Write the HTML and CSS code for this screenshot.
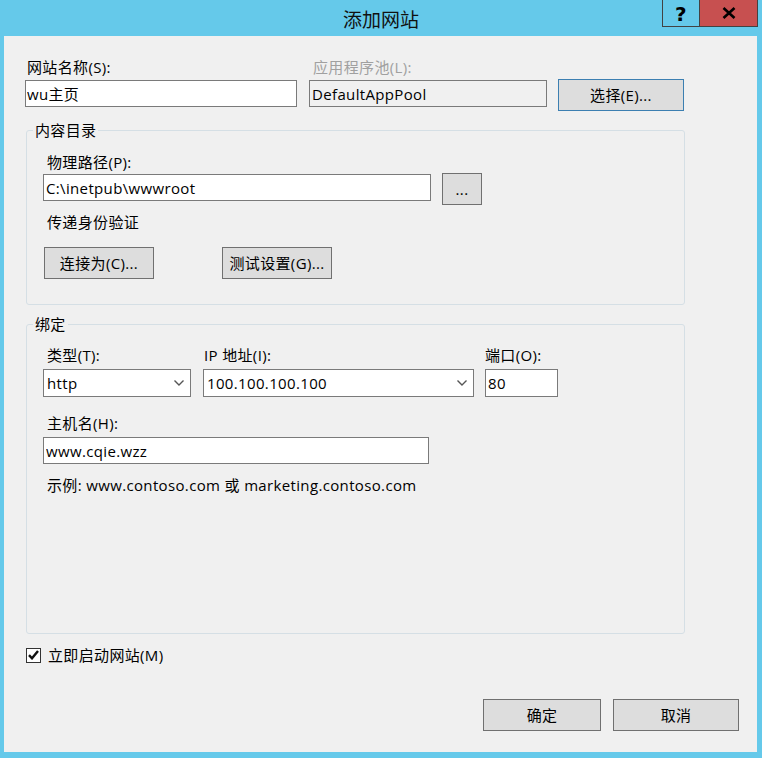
FILE: index.html
```html
<!DOCTYPE html>
<html lang="zh-CN">
<head>
    <meta charset="UTF-8">
    <title>添加网站</title>
    <link rel="stylesheet" href="styles.css">
</head>
<body>

<div class="window">
    <div class="titlebar">
        <div></div>
        <div class="title">添加网站</div>
        <div class="caption-btns">
            <div class="cap-btn help">?</div>
            <div class="cap-btn close">
                <svg width="14" height="12" viewBox="0 0 14 12">
                    <path d="M1.5 1 L12.5 11 M12.5 1 L1.5 11" stroke="#000" stroke-width="2.6" fill="none"/>
                </svg>
            </div>
        </div>
    </div>

    <div class="client">
        <!-- 网站名称 / 应用程序池 -->
        <div class="top-row">
            <div class="field site-name">
                <div class="lbl">网站名称(S):</div>
                <input class="textbox" type="text" value="wu主页">
            </div>
            <div class="field app-pool">
                <div class="lbl disabled">应用程序池(L):</div>
                <input class="textbox readonly" type="text" value="DefaultAppPool" readonly>
            </div>
            <button class="btn btn-default select-btn">选择(E)...</button>
        </div>

        <!-- 内容目录 -->
        <fieldset class="group content-dir">
            <legend>内容目录</legend>
            <div class="group-body">
                <div class="lbl">物理路径(P):</div>
                <div class="path-row">
                    <input class="textbox path-box" type="text" value="C:\inetpub\wwwroot">
                    <button class="btn browse-btn">...</button>
                </div>
                <div class="lbl pass-auth">传递身份验证</div>
                <div class="auth-row">
                    <button class="btn auth-btn">连接为(C)...</button>
                    <button class="btn auth-btn test-btn">测试设置(G)...</button>
                </div>
            </div>
        </fieldset>

        <!-- 绑定 -->
        <fieldset class="group binding">
            <legend>绑定</legend>
            <div class="group-body">
                <div class="bind-row">
                    <div class="field type-field">
                        <div class="lbl">类型(T):</div>
                        <div class="combo">
                            <span>http</span>
                            <svg class="chevron" width="10" height="6" viewBox="0 0 10 6">
                                <path d="M0.5 0.5 L5 5 L9.5 0.5" stroke="#555" stroke-width="1.4" fill="none"/>
                            </svg>
                        </div>
                    </div>
                    <div class="field ip-field">
                        <div class="lbl">IP 地址(I):</div>
                        <div class="combo">
                            <span>100.100.100.100</span>
                            <svg class="chevron" width="10" height="6" viewBox="0 0 10 6">
                                <path d="M0.5 0.5 L5 5 L9.5 0.5" stroke="#555" stroke-width="1.4" fill="none"/>
                            </svg>
                        </div>
                    </div>
                    <div class="field port-field">
                        <div class="lbl">端口(O):</div>
                        <input class="textbox port-box" type="text" value="80">
                    </div>
                </div>
                <div class="lbl host-lbl">主机名(H):</div>
                <input class="textbox host-box" type="text" value="www.cqie.wzz">
                <div class="lbl example">示例: www.contoso.com 或 marketing.contoso.com</div>
            </div>
        </fieldset>

        <div class="check-row">
            <span class="checkbox">
                <svg width="11" height="10" viewBox="0 0 11 10">
                    <path d="M1 5.2 L4 8.3 L10 1" stroke="#111" stroke-width="2.4" fill="none"/>
                </svg>
            </span>
            <span>立即启动网站(M)</span>
        </div>

        <div class="dialog-btns">
            <button class="btn ok-btn">确定</button>
            <button class="btn cancel-btn">取消</button>
        </div>
    </div>
</div>

</body>
</html>
```

FILE: styles.css
```css
* {
    margin: 0;
    padding: 0;
    box-sizing: border-box;
}

body {
    width: 762px;
    height: 758px;
    background: #65c9ea;
    font-family: "Open Sans", "Noto Sans CJK SC", sans-serif;
    font-size: 15px;
    line-height: 20px;
    letter-spacing: 0.35px;
    color: #000;
    overflow: hidden;
}

.window {
    width: 762px;
    height: 758px;
}

/* 标题栏 */
.titlebar {
    height: 36px;
    display: grid;
    grid-template-columns: 1fr auto 1fr;
}

.title {
    font-family: "Noto Sans CJK SC", sans-serif;
    font-size: 19px;
    line-height: 38px;
    letter-spacing: 0;
    color: #111;
}

.caption-btns {
    justify-self: end;
    display: flex;
    margin-right: 4px;
    height: 27px;
}

.cap-btn {
    height: 27px;
    border: 1px solid #424242;
    border-top: none;
    display: flex;
    align-items: center;
    justify-content: center;
}

.help {
    width: 37px;
    border-right: none;
    font-family: "DejaVu Sans", sans-serif;
    font-weight: bold;
    font-size: 20px;
    line-height: 20px;
    padding-top: 1px;
}

.close {
    width: 59px;
    background: #c75050;
}

/* 客户区 */
.client {
    margin: 0 5px 0 4px;
    height: 716px;
    background: #f0f0f0;
    padding-left: 21px;
}

.lbl {
    line-height: 20px;
    white-space: nowrap;
}

.disabled {
    color: #a0a0a0;
}

.textbox {
    display: block;
    height: 27px;
    border: 1px solid #7a7a7a;
    background: #fff;
    font: inherit;
    letter-spacing: inherit;
    line-height: 20px;
    padding: 0 2px;
    color: #000;
    outline: none;
}

.readonly {
    background: #f0f0f0;
    padding-left: 2px;
}

.btn {
    display: block;
    height: 32px;
    border: 1px solid #707070;
    background: #dddddd;
    font: inherit;
    letter-spacing: inherit;
    line-height: 20px;
    color: #000;
    text-align: center;
}

.btn-default {
    border-color: #3c7fb1;
}

.top-row {
    display: flex;
    padding-top: 21px;
}

.site-name {
    width: 272px;
}

.site-name .lbl {
    padding-left: 2px;
    margin-bottom: 3px;
}

.site-name .textbox {
    width: 272px;
    padding-left: 1px;
}

.app-pool {
    width: 238px;
    margin-left: 12px;
}

.app-pool .lbl {
    padding-left: 4px;
    margin-bottom: 3px;
}

.app-pool .textbox {
    width: 238px;
}

.select-btn {
    width: 126px;
    margin-left: 11px;
    margin-top: 22px;
}

/* 分组框 */
.group {
    width: 659px;
    margin-left: 1px;
    border: 1px solid #d5dfe5;
    border-radius: 3px;
    padding: 0;
}

.group legend {
    margin-left: 6px;
    padding: 0 2px;
    line-height: 20px;
}

.group-body {
    padding-left: 16px;
}

.group-body > .lbl {
    padding-left: 4px;
}

.content-dir {
    margin-top: 9px;
}

.content-dir .group-body {
    padding-top: 12px;
    padding-bottom: 25px;
}

.path-row {
    display: flex;
    align-items: flex-start;
    margin-top: 2px;
}

.path-box {
    width: 388px;
}

.browse-btn {
    width: 40px;
    margin-left: 11px;
    margin-top: -1px;
}

.pass-auth {
    margin-top: 7px;
}

.auth-row {
    display: flex;
    margin-top: 15px;
}

.auth-btn {
    width: 110px;
    margin-left: 1px;
}

.test-btn {
    margin-left: 68px;
}

.binding {
    margin-top: 9px;
}

.binding .group-body {
    padding-top: 11px;
    padding-bottom: 138px;
}

.bind-row {
    display: flex;
}

.bind-row .lbl {
    margin-bottom: 4px;
}

.type-field {
    width: 148px;
}

.type-field .lbl {
    padding-left: 4px;
}

.ip-field {
    width: 271px;
    margin-left: 12px;
}

.ip-field .lbl {
    padding-left: 1px;
}

.port-field {
    width: 73px;
    margin-left: 11px;
}

.combo {
    height: 28px;
    border: 1px solid #7a7a7a;
    background: #fff;
    display: flex;
    align-items: center;
    justify-content: space-between;
    padding: 0 6px 0 3px;
}

.chevron {
    display: block;
}

.port-box {
    width: 73px;
    height: 28px;
}

.host-lbl {
    margin-top: 16px;
}

.host-box {
    width: 386px;
    margin-top: 4px;
}

.example {
    margin-top: 11px;
}

/* 复选框 */
.check-row {
    display: flex;
    align-items: center;
    height: 20px;
    margin-top: 11px;
    margin-left: 1px;
}

.checkbox {
    width: 15px;
    height: 15px;
    border: 1px solid #333;
    background: #fff;
    display: flex;
    align-items: center;
    justify-content: center;
    margin-right: 7px;
}

.dialog-btns {
    display: flex;
    justify-content: flex-end;
    margin-top: 34px;
    padding-right: 18px;
}

.ok-btn {
    width: 118px;
}

.cancel-btn {
    width: 126px;
    margin-left: 12px;
}
```
